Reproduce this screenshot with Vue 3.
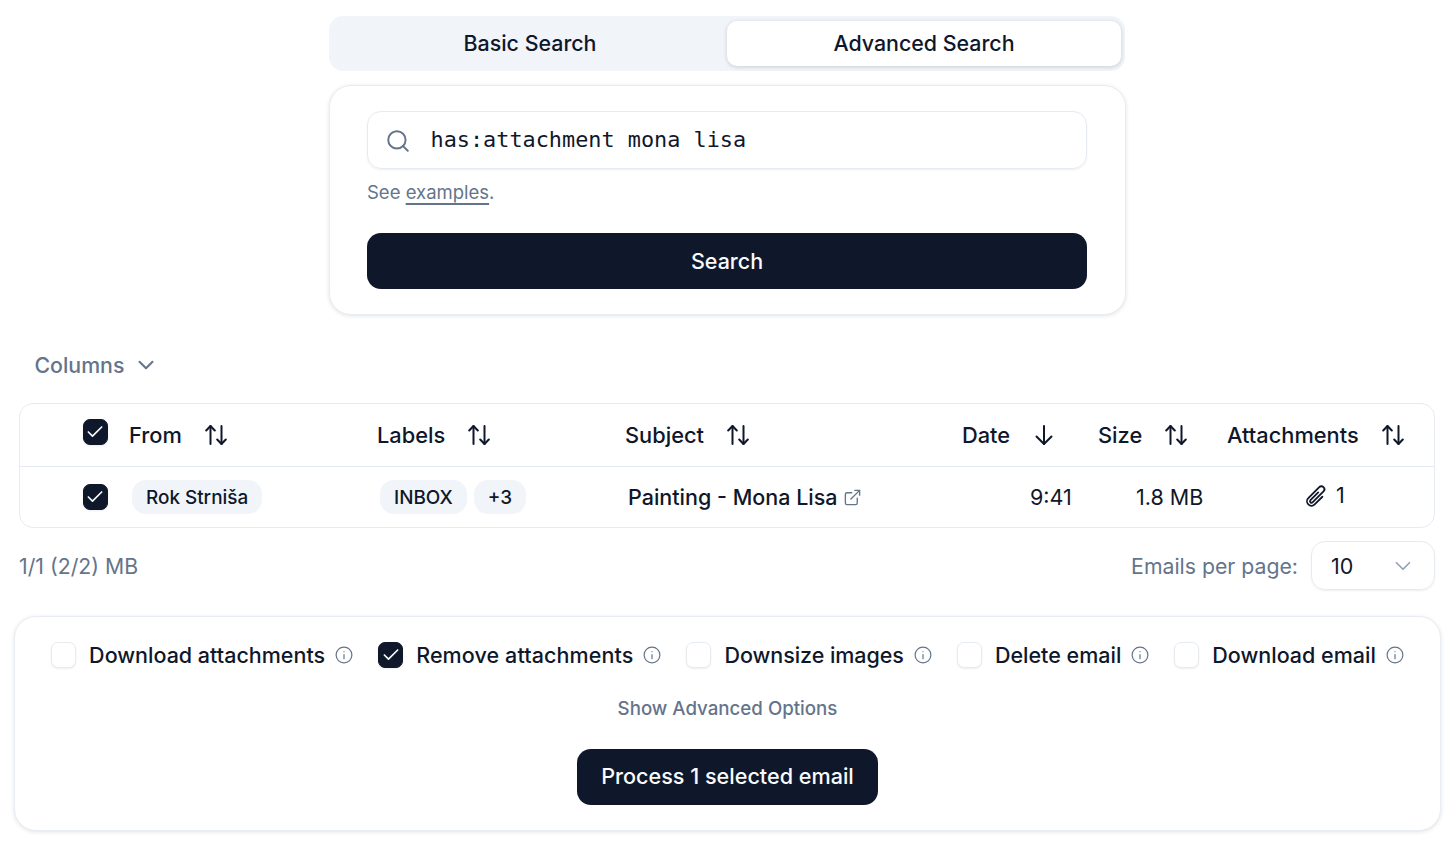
<script setup>
const columns = [
  { name: 'From', icon: 'both' },
  { name: 'Labels', icon: 'both' },
  { name: 'Subject', icon: 'both' },
  { name: 'Date', icon: 'down' },
  { name: 'Size', icon: 'both' },
  { name: 'Attachments', icon: 'both' }
]

const options = [
  { label: 'Download attachments', checked: false },
  { label: 'Remove attachments', checked: true },
  { label: 'Downsize images', checked: false },
  { label: 'Delete email', checked: false },
  { label: 'Download email', checked: false }
]
</script>

<template>
  <div class="page">
    <div class="search-wrap">
      <div class="tabs">
        <button class="tab">Basic Search</button>
        <button class="tab active">Advanced Search</button>
      </div>
      <div class="search-card">
        <div class="search-input">
          <svg class="search-icon" viewBox="0 0 24 24" fill="none" stroke="currentColor" stroke-width="1.8" stroke-linecap="round" stroke-linejoin="round">
            <circle cx="11" cy="11" r="8" />
            <path d="m21 21-4.3-4.3" />
          </svg>
          <span class="query">has:attachment mona lisa</span>
        </div>
        <p class="hint">See <a class="hint-link">examples</a>.</p>
        <button class="search-btn">Search</button>
      </div>
    </div>

    <div class="columns-btn">
      <span>Columns</span>
      <svg class="columns-chev" viewBox="0 0 24 24" fill="none" stroke="currentColor" stroke-width="1.9" stroke-linecap="round" stroke-linejoin="round">
        <path d="m6 9 6 6 6-6" />
      </svg>
    </div>

    <div class="table">
      <div class="row head">
        <div class="cell check-cell">
          <span class="checkbox checked head-check">
            <svg viewBox="0 0 24 24" fill="none" stroke="currentColor" stroke-width="2" stroke-linecap="round" stroke-linejoin="round"><path d="M20 6 9 17l-5-5" /></svg>
          </span>
        </div>
        <div v-for="col in columns" :key="col.name" class="cell head-cell">
          <span>{{ col.name }}</span>
          <svg class="sort" viewBox="0 0 22 22" fill="none" stroke="currentColor" stroke-width="2" stroke-linecap="round" stroke-linejoin="round">
            <template v-if="col.icon === 'both'">
              <path d="M5.5 20V2" /><path d="M1.2 6.5 5.5 2l4.3 4.5" /><path d="M16.5 2v18" /><path d="m12.2 15.5 4.3 4.5 4.3-4.5" />
            </template>
            <template v-else>
              <path d="M11 2v18" /><path d="M3.5 12.5 11 20l7.5-7.5" />
            </template>
          </svg>
        </div>
      </div>
      <div class="row body">
        <div class="cell check-cell">
          <span class="checkbox checked">
            <svg viewBox="0 0 24 24" fill="none" stroke="currentColor" stroke-width="2" stroke-linecap="round" stroke-linejoin="round"><path d="M20 6 9 17l-5-5" /></svg>
          </span>
        </div>
        <div class="cell from-cell"><span class="pill">Rok Strniša</span></div>
        <div class="cell labels-cell">
          <span class="pill">INBOX</span>
          <span class="pill">+3</span>
        </div>
        <div class="cell subject-cell">
          <span>Painting - Mona Lisa</span>
          <svg class="ext" viewBox="0 0 24 24" fill="none" stroke="currentColor" stroke-width="1.7" stroke-linecap="round" stroke-linejoin="round">
            <path d="M15 3h6v6" /><path d="M10 14 21 3" /><path d="M18 13v6a2 2 0 0 1-2 2H5a2 2 0 0 1-2-2V8a2 2 0 0 1 2-2h6" />
          </svg>
        </div>
        <div class="cell date-cell">9:41</div>
        <div class="cell size-cell">1.8 MB</div>
        <div class="cell attach-cell">
          <svg class="clip" viewBox="0 0 24 24" fill="none" stroke="currentColor" stroke-width="1.8" stroke-linecap="round" stroke-linejoin="round">
            <path d="m18.375 12.739-7.693 7.693a4.5 4.5 0 0 1-6.364-6.364l10.94-10.94A3 3 0 1 1 19.5 7.372L8.552 18.32m.009-.01-.01.01m5.699-9.941-7.81 7.81a1.5 1.5 0 0 0 2.112 2.13" />
          </svg>
          <span class="attach-count">1</span>
        </div>
      </div>
    </div>

    <div class="pager">
      <span class="muted">1/1 (2/2) MB</span>
      <div class="per-page">
        <span class="muted">Emails per page:</span>
        <div class="select">
          <span>10</span>
          <svg class="select-chev" viewBox="0 0 24 24" fill="none" stroke="currentColor" stroke-width="1.6" stroke-linecap="round" stroke-linejoin="round">
            <path d="m6 9 6 6 6-6" />
          </svg>
        </div>
      </div>
    </div>

    <div class="process-card">
      <div class="options">
        <div v-for="opt in options" :key="opt.label" class="option">
          <span class="checkbox" :class="{ checked: opt.checked }">
            <svg v-if="opt.checked" viewBox="0 0 24 24" fill="none" stroke="currentColor" stroke-width="2" stroke-linecap="round" stroke-linejoin="round"><path d="M20 6 9 17l-5-5" /></svg>
          </span>
          <span class="option-label">{{ opt.label }}</span>
          <svg class="info" viewBox="0 0 24 24" fill="none" stroke="currentColor" stroke-width="1.6" stroke-linecap="round" stroke-linejoin="round">
            <circle cx="12" cy="12" r="10.5" /><path d="M12 17v-5.5" /><path d="M12 7.5h.01" />
          </svg>
        </div>
      </div>
      <div class="advanced">Show Advanced Options</div>
      <button class="process-btn">Process 1 selected email</button>
    </div>
  </div>
</template>

<style>
html, body {
  background: #fff;
}
</style>

<style scoped>
.page {
  font-family: Inter, "Liberation Sans", sans-serif;
  font-size: 21.5px;
  color: #0f172a;
  box-sizing: border-box;
  width: 1456px;
  height: 849px;
  overflow: hidden;
  padding-top: 16px;
}

button {
  font-family: inherit;
  border: none;
  cursor: pointer;
}

.search-wrap {
  width: 797px;
  margin-left: 329px;
}

.tabs {
  display: flex;
  box-sizing: border-box;
  width: 796px;
  height: 55px;
  padding: 5px 4px;
  border-radius: 14px;
  background: #f1f5f9;
}

.tab {
  flex: 1;
  padding: 0 0 2px;
  background: transparent;
  font-size: 21.4px;
  font-weight: 500;
  color: #0f172a;
  border-radius: 10px;
}

.tab.active {
  background: #fff;
  box-shadow: 0 1px 4px rgba(15, 23, 42, 0.18);
}

.search-card {
  box-sizing: border-box;
  height: 230px;
  margin-top: 14px;
  padding: 25px 38px 0 37px;
  background: #fff;
  border: 1.5px solid #e8edf3;
  border-radius: 22px;
  box-shadow: 0 1px 4px rgba(15, 23, 42, 0.12);
}

.search-input {
  display: flex;
  align-items: center;
  box-sizing: border-box;
  height: 58px;
  padding-left: 16.5px;
  padding-bottom: 1px;
  border: 1.5px solid #e6ebf1;
  border-radius: 14px;
  box-shadow: 0 1px 2px rgba(15, 23, 42, 0.07);
}

.search-icon {
  width: 26px;
  height: 26px;
  color: #64748b;
  margin-top: 2px;
}

.query {
  margin-left: 20px;
  font-family: "DejaVu Sans Mono", "Liberation Mono", monospace;
  font-size: 21.85px;
  color: #0f172a;
}

.hint {
  margin: 9px 0 0;
  font-size: 18.5px;
  line-height: 28px;
  color: #64748b;
}

.hint-link {
  text-decoration: underline;
  text-decoration-thickness: 1.5px;
  text-underline-offset: 4px;
}

.search-btn {
  display: block;
  width: 100%;
  height: 56px;
  margin-top: 27px;
  padding-bottom: 2px;
  background: #0f172a;
  color: #f8fafc;
  font-size: 21.5px;
  font-weight: 500;
  border-radius: 14px;
}

.columns-btn {
  display: flex;
  align-items: center;
  gap: 9px;
  margin: 35px 0 0 34.5px;
  height: 30px;
  font-size: 21.3px;
  color: #64748b;
  font-weight: 500;
}

.columns-chev {
  width: 26px;
  height: 26px;
}

.table {
  box-sizing: border-box;
  width: 1416px;
  margin: 23px 0 0 19px;
  border: 1.5px solid #e6ebf1;
  border-radius: 14px;
}

.row {
  display: grid;
  grid-template-columns: 109px 248px 248px 337px 136px 129px 1fr;
  align-items: center;
}

.row.head {
  height: 62px;
  border-bottom: 1.5px solid #e6ebf1;
  font-size: 21.8px;
  font-weight: 500;
}

.row.body {
  height: 60px;
}

.cell {
  display: flex;
  align-items: center;
}

.check-cell {
  padding-left: 62.5px;
}

.head-cell {
  gap: 23px;
}

.sort {
  width: 22px;
  height: 22px;
}

.checkbox {
  box-sizing: border-box;
  display: flex;
  align-items: center;
  justify-content: center;
  flex: none;
  width: 25px;
  height: 26px;
  border: 1.5px solid #e6ebf1;
  border-radius: 7px;
  box-shadow: 0 1px 2px rgba(15, 23, 42, 0.08);
  background: #fff;
}

.checkbox.checked {
  background: #0f172a;
  border-color: #0f172a;
  color: #f8fafc;
}

.checkbox.head-check {
  margin-bottom: 6px;
}

.checkbox svg {
  width: 20px;
  height: 20px;
}

.pill {
  display: inline-flex;
  align-items: center;
  height: 34px;
  padding: 0 14px;
  background: #f1f5f9;
  border-radius: 14px;
  font-size: 18.9px;
  font-weight: 500;
}

.from-cell {
  padding-left: 3px;
}

.labels-cell {
  padding-left: 3px;
  gap: 7px;
}

.subject-cell {
  padding-left: 3px;
  gap: 5px;
  font-weight: 500;
}

.ext {
  width: 19px;
  height: 19px;
  color: #64748b;
  margin-top: 1px;
}

.date-cell {
  padding-left: 68px;
}

.size-cell {
  padding-left: 38px;
}

.attach-cell {
  padding-left: 77px;
  gap: 8px;
}

.clip {
  width: 24px;
  height: 24px;
  margin-bottom: 3px;
}

.attach-count {
  margin-bottom: 4px;
}

.pager {
  display: flex;
  justify-content: space-between;
  align-items: center;
  width: 1416px;
  margin: 13px 0 0 19px;
}

.muted {
  font-size: 21.25px;
  color: #64748b;
}

.per-page {
  display: flex;
  align-items: center;
  gap: 13px;
}

.select {
  box-sizing: border-box;
  display: flex;
  align-items: center;
  justify-content: space-between;
  width: 124px;
  height: 49px;
  padding: 0 18px 0 19px;
  border: 1.5px solid #e6ebf1;
  border-radius: 14px;
  box-shadow: 0 1px 2px rgba(15, 23, 42, 0.07);
}

.select-chev {
  width: 26px;
  height: 26px;
  color: #94a3b8;
}

.process-card {
  box-sizing: border-box;
  display: flex;
  flex-direction: column;
  align-items: center;
  width: 1427px;
  height: 215px;
  margin: 26px 0 0 14px;
  background: #fff;
  border: 1.5px solid #e8edf3;
  border-radius: 22px;
  box-shadow: 0 1px 4px rgba(15, 23, 42, 0.12);
}

.options {
  display: flex;
  justify-content: center;
  align-items: center;
  gap: 25px;
  margin-top: 24.5px;
  height: 26px;
}

.option {
  display: flex;
  align-items: center;
}

.option:nth-child(2) .option-label {
  letter-spacing: 0.1px;
}

.option:nth-child(3) .option-label {
  letter-spacing: -0.05px;
}

.option-label {
  margin-left: 13px;
  font-weight: 500;
}

.info {
  width: 18px;
  height: 18px;
  margin-left: 10px;
  color: #64748b;
}

.advanced {
  margin-top: 27.5px;
  font-size: 18.7px;
  font-weight: 500;
  line-height: 28px;
  color: #64748b;
}

.process-btn {
  height: 56px;
  margin-top: 26px;
  padding: 0 24.5px 2px;
  background: #0f172a;
  color: #f8fafc;
  font-size: 21.6px;
  font-weight: 500;
  border-radius: 14px;
}
</style>
